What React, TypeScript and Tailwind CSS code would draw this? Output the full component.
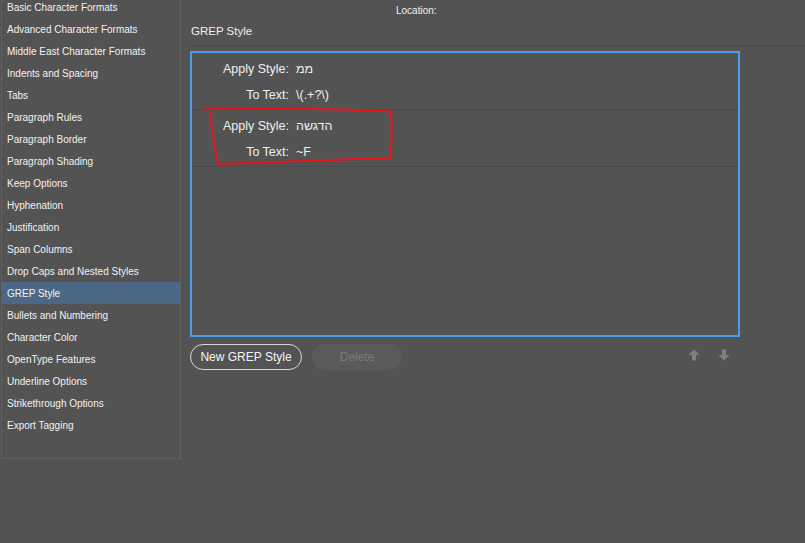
const items = [
  'Basic Character Formats',
  'Advanced Character Formats',
  'Middle East Character Formats',
  'Indents and Spacing',
  'Tabs',
  'Paragraph Rules',
  'Paragraph Border',
  'Paragraph Shading',
  'Keep Options',
  'Hyphenation',
  'Justification',
  'Span Columns',
  'Drop Caps and Nested Styles',
  'GREP Style',
  'Bullets and Numbering',
  'Character Color',
  'OpenType Features',
  'Underline Options',
  'Strikethrough Options',
  'Export Tagging',
];

const rules = [
  { style: 'ממ', text: '\\(.+?\\)' },
  { style: 'הדגשה', text: '~F' },
];

function Sidebar() {
  return (
    <div className="ml-px w-[180px] h-[459px] border border-t-0 border-[#606060] overflow-hidden shrink-0">
      <ul className="-mt-[4px]">
        {items.map((item) => (
          <li
            key={item}
            className={`h-[22px] flex items-center pl-[5px] text-[10px] text-[#f2f2f2] ${
              item === 'GREP Style' ? 'bg-[#4c6886]' : ''
            }`}
          >
            {item}
          </li>
        ))}
      </ul>
    </div>
  );
}

function RuleRow({ style, text }: { style: string; text: string }) {
  return (
    <div className="h-[57px] border-b border-[#4a4a4a] grid grid-cols-[97px_1fr] gap-x-[7px] content-start pt-[3px] text-[12.5px] text-[#f0f0f0]">
      <span className="text-right h-[26px] leading-[26px]">Apply Style:</span>
      <span className="h-[26px] leading-[26px]">{style}</span>
      <span className="text-right h-[26px] leading-[26px]">To Text:</span>
      <span className="h-[26px] leading-[26px]">{text}</span>
    </div>
  );
}

export default function App() {
  return (
    <div
      className="w-[805px] h-[543px] bg-[#535353] flex relative overflow-hidden"
      style={{ fontFamily: '"Liberation Sans", Arial, sans-serif' }}
    >
      <Sidebar />
      <div className="flex-1 pl-[9px]">
        <div className="h-[46px] border-b border-[#4a4a4a] relative">
          <div className="pl-[206px] pt-[3px] text-[10px] text-[#f0f0f0]">Location:</div>
          <div className="pt-[5px] pl-px text-[11.5px] text-[#f0f0f0]">GREP Style</div>
        </div>
        <div className="mt-[5px] w-[550px] h-[286px] border-2 border-[#4a9cf0]">
          {rules.map((r) => (
            <RuleRow key={r.text} {...r} />
          ))}
        </div>
        <div className="mt-[7px] flex items-center w-[550px]">
          <button className="h-[26px] w-[112px] rounded-full border border-[#d8d8d8] text-[12px] text-[#f4f4f4]">
            New GREP Style
          </button>
          <button className="ml-[10px] h-[26px] w-[90px] rounded-full bg-[#5a5a5a] text-[12px] text-[#7b7b7b]">
            Delete
          </button>
          <div className="ml-auto mr-[10px] mb-[4px] flex gap-[18px] text-[#808080]">
            <svg width="12" height="12" viewBox="0 0 12 12">
              <path d="M6 0.5 L11.5 6 L8 6 L8 11.5 L4 11.5 L4 6 L0.5 6 Z" fill="currentColor" />
            </svg>
            <svg width="12" height="12" viewBox="0 0 12 12">
              <path d="M6 11.5 L11.5 6 L8 6 L8 0.5 L4 0.5 L4 6 L0.5 6 Z" fill="currentColor" />
            </svg>
          </div>
        </div>
      </div>
      <svg className="absolute left-0 top-0 pointer-events-none" width="805" height="543">
        <path
          d="M205 108.5 C 260 108, 340 109, 391 111.5 C 392 127, 392 145, 390 158 C 330 160, 260 162, 218 164 C 214 148, 212 128, 210 112"
          fill="none"
          stroke="#e8141a"
          strokeWidth="2"
          strokeLinecap="round"
          strokeLinejoin="round"
        />
      </svg>
    </div>
  );
}
